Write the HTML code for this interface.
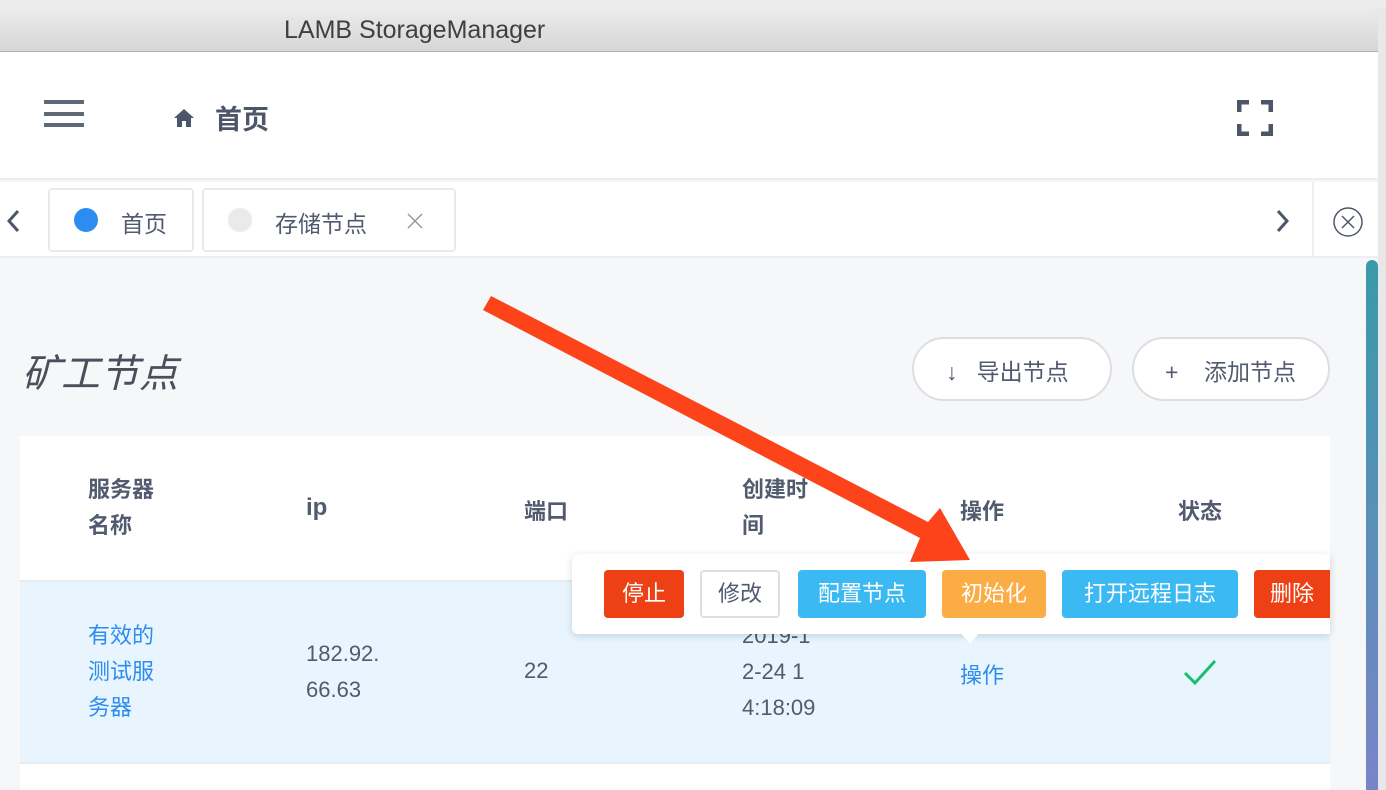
<!DOCTYPE html>
<html><head><meta charset="utf-8"><style>
*{margin:0;padding:0;box-sizing:border-box}
body{width:1386px;height:790px;overflow:hidden;background:#e8e8e8;font-family:"Liberation Sans","Noto Sans CJK SC",sans-serif;position:relative;color:#515a6e}
.a{position:absolute}
.t{white-space:nowrap}
.btn{position:absolute;top:570px;height:48px;border-radius:4px;color:#fff;font-size:22px;line-height:48px;text-align:center}
</style></head><body>
<div class="a" style="left:0;top:0;width:1386px;height:8px;background:#ececec"></div>
<div class="a" style="left:0;top:8px;width:1378px;height:44px;background:linear-gradient(#ececec,#d6d6d6);border-bottom:1px solid #b0b0b0;border-radius:0 8px 0 0"></div>
<div class="a t" style="left:284px;top:16px;font-size:25px;color:#404040">LAMB StorageManager</div>
<div class="a" style="left:0;top:52px;width:1378px;height:738px;background:#f5f7f9"></div>
<div class="a" style="left:0;top:52px;width:1378px;height:128px;background:#fff;border-bottom:2px solid #eceef1"></div>
<div class="a" style="left:44px;top:100px;width:40px;height:4px;background:#5e6a78"></div>
<div class="a" style="left:44px;top:112px;width:40px;height:4px;background:#5e6a78"></div>
<div class="a" style="left:44px;top:123px;width:40px;height:4px;background:#5e6a78"></div>
<svg class="a" style="left:173px;top:107px" width="22" height="22" viewBox="0 0 22 22"><path d="M11 2L1 11h3v9h5v-6h4v6h5v-9h3z" fill="#4d5669"/></svg>
<div class="a t" style="left:215px;top:98px;font-size:27px;color:#4d5669;font-weight:bold">首页</div>
<svg class="a" style="left:1237px;top:100px" width="36" height="36" viewBox="0 0 36 36" fill="none" stroke="#4d5669" stroke-width="5"><path d="M2 12V2h10M24 2h10v10M34 24v10H24M12 34H2V24"/></svg>
<div class="a" style="left:0;top:182px;width:1378px;height:76px;background:#fff;border-bottom:2px solid #eceef1"></div>
<svg class="a" style="left:4px;top:208px" width="18" height="26" viewBox="0 0 18 26"><path d="M14 3L5 13l9 10" stroke="#4d5669" stroke-width="3" fill="none"/></svg>
<div class="a" style="left:48px;top:188px;width:146px;height:64px;border:2px solid #e8eaec;border-radius:4px"></div>
<div class="a" style="left:74px;top:208px;width:24px;height:24px;border-radius:50%;background:#2d8cf0"></div>
<div class="a t" style="left:121px;top:205px;font-size:23px">首页</div>
<div class="a" style="left:202px;top:188px;width:254px;height:64px;border:2px solid #e8eaec;border-radius:4px"></div>
<div class="a" style="left:228px;top:208px;width:24px;height:24px;border-radius:50%;background:#e8eaec"></div>
<div class="a t" style="left:275px;top:205px;font-size:23px">存储节点</div>
<svg class="a" style="left:406px;top:212px" width="18" height="18"><path d="M2 2l14 14M16 2L2 16" stroke="#999" stroke-width="1.5"/></svg>
<svg class="a" style="left:1274px;top:208px" width="18" height="26" viewBox="0 0 18 26"><path d="M4 3l9 10-9 10" stroke="#4d5669" stroke-width="3" fill="none"/></svg>
<div class="a" style="left:1312px;top:182px;width:2px;height:76px;background:#eceef1"></div>
<svg class="a" style="left:1332px;top:206px" width="32" height="32"><circle cx="16" cy="16" r="14" stroke="#4d5669" stroke-width="1.5" fill="none"/><path d="M10 10l12 12M22 10L10 22" stroke="#4d5669" stroke-width="1.5"/></svg>
<div class="a" style="left:1366px;top:260px;width:12px;height:530px;border-radius:6px 6px 0 0;background:linear-gradient(#3a9aa8,#7a84c8)"></div>
<div class="a t" style="left:22px;top:343px;font-size:39px;font-style:italic;color:#4a4f5a">矿工节点</div>
<div class="a" style="left:912px;top:337px;width:200px;height:64px;border:2px solid #dcdee2;border-radius:32px;background:#fff"></div>
<div class="a t" style="left:946px;top:353px;font-size:23px">↓&nbsp;&nbsp;&nbsp;导出节点</div>
<div class="a" style="left:1132px;top:337px;width:198px;height:64px;border:2px solid #dcdee2;border-radius:32px;background:#fff"></div>
<div class="a t" style="left:1165px;top:353px;font-size:23px">+&nbsp;&nbsp;&nbsp;&nbsp;添加节点</div>
<div class="a" style="left:20px;top:436px;width:1310px;height:354px;background:#fff"></div>
<div class="a" style="left:20px;top:580px;width:1310px;height:184px;background:#e8f5fe;border-top:2px solid #e8eaec;border-bottom:2px solid #e8eaec"></div>
<div class="a" style="left:88px;top:472px;font-size:22px;font-weight:bold;line-height:36px;color:#515a6e">服务器<br>名称</div>
<div class="a t" style="left:306px;top:494px;font-size:24px;font-weight:bold">ip</div>
<div class="a t" style="left:524px;top:494px;font-size:22px;font-weight:bold">端口</div>
<div class="a" style="left:742px;top:472px;font-size:22px;font-weight:bold;line-height:36px">创建时<br>间</div>
<div class="a t" style="left:960px;top:494px;font-size:22px;font-weight:bold">操作</div>
<div class="a t" style="left:1178px;top:494px;font-size:22px;font-weight:bold">状态</div>
<div class="a" style="left:88px;top:618px;font-size:22px;line-height:36px;color:#2d8cf0">有效的<br>测试服<br>务器</div>
<div class="a" style="left:306px;top:636px;font-size:22px;line-height:36px">182.92.<br>66.63</div>
<div class="a t" style="left:524px;top:658px;font-size:22px">22</div>
<div class="a" style="left:742px;top:618px;font-size:22px;line-height:36px">2019-1<br>2-24 1<br>4:18:09</div>
<div class="a t" style="left:960px;top:658px;font-size:22px;color:#2d8cf0">操作</div>
<svg class="a" style="left:1182px;top:658px" width="36" height="28"><path d="M3 15l10 10L33 3" stroke="#19be6b" stroke-width="3" fill="none"/></svg>
<div class="a" style="left:572px;top:554px;width:758px;height:80px;background:#fff;border-radius:6px 0 0 6px;box-shadow:0 2px 8px rgba(0,0,0,.15)"></div>
<div class="a" style="left:960px;top:632px;width:0;height:0;border-left:10px solid transparent;border-right:10px solid transparent;border-top:12px solid #fff"></div>
<div class="btn" style="left:604px;width:80px;background:#ed4014">停止</div>
<div class="btn" style="left:700px;width:80px;background:#fff;color:#515a6e;border:2px solid #dcdee2;line-height:44px">修改</div>
<div class="btn" style="left:798px;width:128px;background:#3bb9f3">配置节点</div>
<div class="btn" style="left:942px;width:104px;background:#fcac45">初始化</div>
<div class="btn" style="left:1062px;width:176px;background:#3bb9f3">打开远程日志</div>
<div class="btn" style="left:1254px;width:76px;background:#ed4014;border-radius:4px 0 0 4px">删除</div>
<svg class="a" style="left:0;top:0" width="1386" height="790"><path d="M483 310L491 296L928 522L940 508L970 560L910 562L920 538Z" fill="#fd4319"/></svg>
</body></html>
